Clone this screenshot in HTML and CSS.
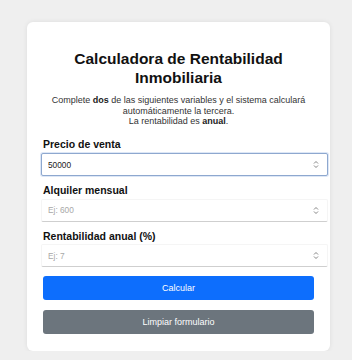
FILE: index.html
```html
<!DOCTYPE html>
<html lang="es">
<head>
  <meta charset="UTF-8" />
  <meta name="viewport" content="width=device-width, initial-scale=1.0" />
  <title>Calculadora de Rentabilidad Inmobiliaria</title>
  <link rel="stylesheet" href="styles.css">
</head>
<body>
  <div class="card">
    <h1>Calculadora de Rentabilidad Inmobiliaria</h1>
    <p class="intro">
      Complete <strong>dos</strong> de las siguientes variables y el sistema calculará automáticamente la tercera.<br>
      La rentabilidad es <strong>anual</strong>.
    </p>

    <label for="precio">Precio de venta</label>
    <div class="field focused">
      <input type="text" id="precio" value="50000">
      <svg class="spin" width="6" height="9" viewBox="0 0 6 9"><path d="M1 3.5 3 1.5 5 3.5M1 5.5 3 7.5 5 5.5" fill="none" stroke="#777" stroke-width="0.9"/></svg>
    </div>

    <label for="alquiler">Alquiler mensual</label>
    <div class="field">
      <input type="text" id="alquiler" placeholder="Ej: 600">
      <svg class="spin" width="6" height="9" viewBox="0 0 6 9"><path d="M1 3.5 3 1.5 5 3.5M1 5.5 3 7.5 5 5.5" fill="none" stroke="#777" stroke-width="0.9"/></svg>
    </div>

    <label for="rent">Rentabilidad anual (%)</label>
    <div class="field">
      <input type="text" id="rent" placeholder="Ej: 7">
      <svg class="spin" width="6" height="9" viewBox="0 0 6 9"><path d="M1 3.5 3 1.5 5 3.5M1 5.5 3 7.5 5 5.5" fill="none" stroke="#777" stroke-width="0.9"/></svg>
    </div>

    <button class="btn btn-primary">Calcular</button>
    <button class="btn btn-secondary">Limpiar formulario</button>
  </div>
</body>
</html>
```

FILE: styles.css
```css
body { margin: 0; background: #efefef; font-family: "Liberation Sans", Arial, sans-serif; color: #222; }
.card { box-sizing: border-box; width: 303px; margin: 22px 0 0 27px; padding: 28px 16px 17px; background: #fff; border-radius: 6px; box-shadow: 0 0 5px rgba(0,0,0,0.08); }
h1 { margin: 0; font-size: 15.5px; line-height: 18.6px; text-align: center; color: #111; }
.intro { margin: 8px 0 0; font-size: 9px; line-height: 10.4px; text-align: center; color: #333; }
.intro strong { color: #222; }
label { display: block; margin-top: 12px; margin-bottom: 2px; font-size: 10.5px; line-height: 12.6px; font-weight: bold; color: #111; }
.field + label { margin-top: 8px; }
.field { position: relative; margin-left: -2px; margin-right: -14px; }
.field input { box-sizing: border-box; width: 100%; height: 23px; padding: 0 20px 0 6px; border: 1px solid #f5f5f5; border-bottom-color: #cfcfcf; border-radius: 2px; font-family: "Liberation Sans", Arial, sans-serif; font-size: 8.3px; color: #222; background: #fff; outline: none; }
.field input::placeholder { color: #a8a8a8; }
.focused input { border: 1px solid #8ea8cf; box-shadow: 0 0 0 1px rgba(120,160,220,0.25); }
.spin { position: absolute; right: 9px; top: 7px; }
.btn { display: block; width: 100%; height: 24px; margin-top: 9px; border: none; border-radius: 3px; font-family: "Liberation Sans", Arial, sans-serif; font-size: 9px; color: #fff; cursor: pointer; }
.btn + .btn { margin-top: 10px; }
.btn-primary { background: #0d6efd; }
.btn-secondary { background: #6c757d; }
```
